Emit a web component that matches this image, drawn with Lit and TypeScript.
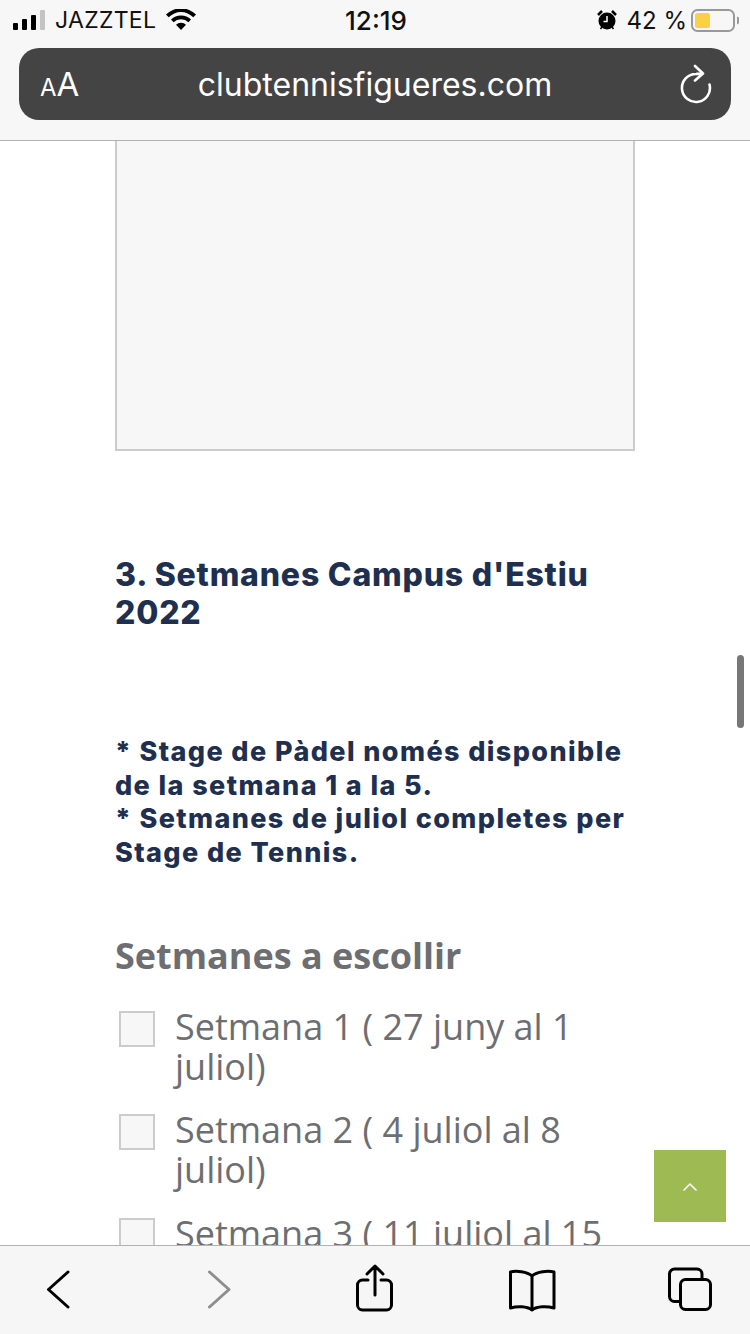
import { LitElement, css, html, svg } from "lit";
import { customElement } from "lit/decorators.js";

const weeks = [
  "Setmana 1 ( 27 juny al 1 juliol)",
  "Setmana 2 ( 4 juliol al 8 juliol)",
  "Setmana 3 ( 11 juliol al 15 juliol)",
];

const icon = (w: number, h: number, body: unknown) =>
  html`<svg width=${w} height=${h} viewBox="0 0 ${w} ${h}" fill="none" stroke="currentColor" stroke-width="3" stroke-linecap="round" stroke-linejoin="round">${body}</svg>`;

@customElement("app-root")
export class AppRoot extends LitElement {
  static styles = css`
    :host {
      display: flex;
      flex-direction: column;
      position: relative;
      width: 750px;
      height: 1334px;
      overflow: hidden;
      background: #fff;
      font-family: Inter, "Liberation Sans", sans-serif;
    }
    .top {
      flex: none;
      height: 141px;
      box-sizing: border-box;
      background: #f7f7f7;
      border-bottom: 1px solid #b2b2b2;
      display: flex;
      flex-direction: column;
    }
    .status {
      height: 48px;
      box-sizing: border-box;
      padding: 0 11px 8px 13px;
      display: grid;
      grid-template-columns: 1fr auto 1fr;
      align-items: center;
      font-size: 23px;
      color: #111;
    }
    .status-left {
      display: flex;
      align-items: center;
      gap: 10px;
    }
    .status-right {
      display: flex;
      align-items: center;
      justify-content: flex-end;
      gap: 4px;
      font-size: 24px;
    }
    .status-right svg:first-child {
      margin-right: 6px;
    }
    .time {
      font-size: 26px;
      font-weight: 500;
    }
    .carrier {
      letter-spacing: 0.3px;
    }
    .signal {
      display: flex;
      align-items: flex-end;
      gap: 4px;
      height: 20px;
    }
    .signal i {
      width: 5px;
      background: #000;
      border-radius: 1px;
    }
    .signal i.off {
      background: #c4c4c4;
    }
    .address {
      height: 72px;
      margin: 0 19px;
      padding: 0 17px;
      border-radius: 20px;
      background: #444;
      color: #fff;
      display: grid;
      grid-template-columns: 1fr auto 1fr;
      align-items: center;
    }
    .aa {
      margin-left: 4px;
      font-size: 33px;
      line-height: 1;
    }
    .aa small {
      font-size: 24px;
    }
    .url {
      font-size: 32px;
      font-weight: 400;
    }
    .reload {
      justify-self: end;
      display: flex;
    }
    .page {
      flex: 1;
      min-height: 0;
      overflow: hidden;
      padding: 0 115px;
    }
    .map {
      height: 310px;
      box-sizing: border-box;
      background: #f7f7f7;
      border: 2px solid #ccc;
      border-top: none;
    }
    h2 {
      margin: 105px 0 0;
      color: #1e2f4f;
      font-size: 32px;
      line-height: 38px;
      font-weight: 800;
      letter-spacing: 0.8px;
    }
    .note {
      margin: 103px 0 0;
      color: #1e2f4f;
      font-size: 27px;
      line-height: 33.7px;
      font-weight: 800;
      letter-spacing: 1.4px;
    }
    h3 {
      margin: 62px 0 0;
      color: #6d6e71;
      font-family: "Open Sans", sans-serif;
      font-size: 36px;
      line-height: 48px;
      font-weight: 700;
    }
    .options {
      margin-top: 27px;
    }
    .option {
      display: flex;
      align-items: flex-start;
      gap: 20px;
      margin: 0 0 23.5px 4px;
      color: #6d6e71;
      font-family: "Open Sans", sans-serif;
      font-size: 36px;
      line-height: 40px;
    }
    .box {
      flex: none;
      width: 36px;
      height: 36px;
      margin-top: 4px;
      box-sizing: border-box;
      border: 2px solid #ccc;
      background: #f7f7f7;
    }
    .bottom {
      flex: none;
      height: 89px;
      box-sizing: border-box;
      background: #f6f6f6;
      border-top: 1px solid #b2b2b2;
      padding: 19px 0 0 34px;
      display: grid;
      grid-template-columns: 161px 156px 157px 158px 48px;
      align-items: start;
      color: #000;
    }
    .bottom svg {
      display: block;
      overflow: visible;
    }
    .disabled {
      color: #8e8e8e;
    }
    .thumb {
      position: absolute;
      left: 737px;
      top: 655px;
      width: 7px;
      height: 73px;
      border-radius: 4px;
      background: #777;
    }
    .to-top {
      position: absolute;
      left: 654px;
      top: 1150px;
      width: 72px;
      height: 72px;
      background: #9dbb52;
      color: #fff;
      display: flex;
      align-items: center;
      justify-content: center;
    }
  `;

  render() {
    return html`
      <header class="top">
        <div class="status">
          <div class="status-left">
            <span class="signal">
              <i style="height:7px"></i>
              <i style="height:11px"></i>
              <i style="height:15px"></i>
              <i class="off" style="height:20px"></i>
            </span>
            <span class="carrier">JAZZTEL</span>
            ${this.wifi()}
          </div>
          <div class="time">12:19</div>
          <div class="status-right">
            ${this.alarm()}
            <span>42 %</span>
            ${this.battery()}
          </div>
        </div>
        <div class="address">
          <div class="aa"><small>A</small>A</div>
          <div class="url">clubtennisfigueres.com</div>
          <div class="reload">
            ${icon(34, 40, svg`<path stroke-width="2.6" d="M23 9.500C20 9.500 18 9.800 16 10A14 14 0 1 0 29.500 20.500M15 2L23 9.500L15 16.500"/>`)}
          </div>
        </div>
      </header>

      <main class="page">
        <div class="map"></div>
        <h2>3. Setmanes Campus d'Estiu 2022</h2>
        <p class="note">
          * Stage de Pàdel només disponible de la setmana 1 a la 5.<br />
          * Setmanes de juliol completes per Stage de Tennis.
        </p>
        <h3>Setmanes a escollir</h3>
        <div class="options">
          ${weeks.map(
            (week) => html`
              <div class="option">
                <span class="box"></span>
                <span>${week}</span>
              </div>
            `
          )}
        </div>
      </main>

      <nav class="bottom">
        ${icon(48, 48, svg`<path d="M34 7L14.500 24.500L34 42"/>`)}
        <span class="disabled">
          ${icon(48, 48, svg`<path d="M14.500 7L34 24.500L14.500 42"/>`)}
        </span>
        ${icon(48, 48, svg`<path d="M17 15h-5.500a5 5 0 0 0-5 5v20a5 5 0 0 0 5 5h24a5 5 0 0 0 5-5V20a5 5 0 0 0-5-5H30M24 30V1.500M16 9L24 1L32 9"/>`)}
        ${icon(48, 48, svg`<path d="M24 11C19 6.500 8 5.500 2.500 7V43C9 41 19 41 24 45C29 41 39 41 46 43V7C40 5.500 29 6.500 24 11ZM24 11V45"/>`)}
        ${icon(48, 48, svg`<path d="M13 36.500H8.500a5 5 0 0 1-5-5V9a5 5 0 0 1 5-5H31a5 5 0 0 1 5 5v5"/><rect x="14.500" y="14.500" width="30" height="30" rx="5"/>`)}
      </nav>

      <div class="thumb"></div>
      <div class="to-top">
        ${icon(14, 9, svg`<path stroke-width="1.600" d="M1 8L7 2L13 8"/>`)}
      </div>
    `;
  }

  wifi() {
    return html`<svg width="30" height="22" viewBox="0 0 30 22" fill="#000">
      <path d="M15 21l-5-5.200a7 7 0 0 1 10 0z" />
      <path d="M7.600 13.300L5 10.600a14 14 0 0 1 20 0l-2.600 2.700a10.400 10.400 0 0 0-14.800 0z" />
      <path d="M2.700 8.300L0 5.600a21 21 0 0 1 30 0l-2.700 2.700a17.200 17.200 0 0 0-24.600 0z" />
    </svg>`;
  }

  alarm() {
    return html`<svg width="20" height="22" viewBox="0 0 20 22">
      <circle cx="10" cy="12" r="8.500" fill="#000" />
      <path d="M1 6l4-4M19 6l-4-4" stroke="#000" stroke-width="2.500" />
      <path d="M3.500 20l1.500-2M16.500 20L15 18" stroke="#000" stroke-width="1.500" />
      <path d="M10 7v5.500H6.500" fill="none" stroke="#fff" stroke-width="1.500" />
    </svg>`;
  }

  battery() {
    return html`<svg width="48" height="23" viewBox="0 0 48 23">
      <rect x="1" y="1" width="42" height="21" rx="5.500" fill="none" stroke="#999" stroke-width="2" />
      <rect x="4" y="4" width="15" height="15" rx="2.500" fill="#fbd043" />
      <path d="M46 7.500v8a3 3 0 0 0 2-4A3 3 0 0 0 46 7.500z" fill="#999" />
    </svg>`;
  }
}
